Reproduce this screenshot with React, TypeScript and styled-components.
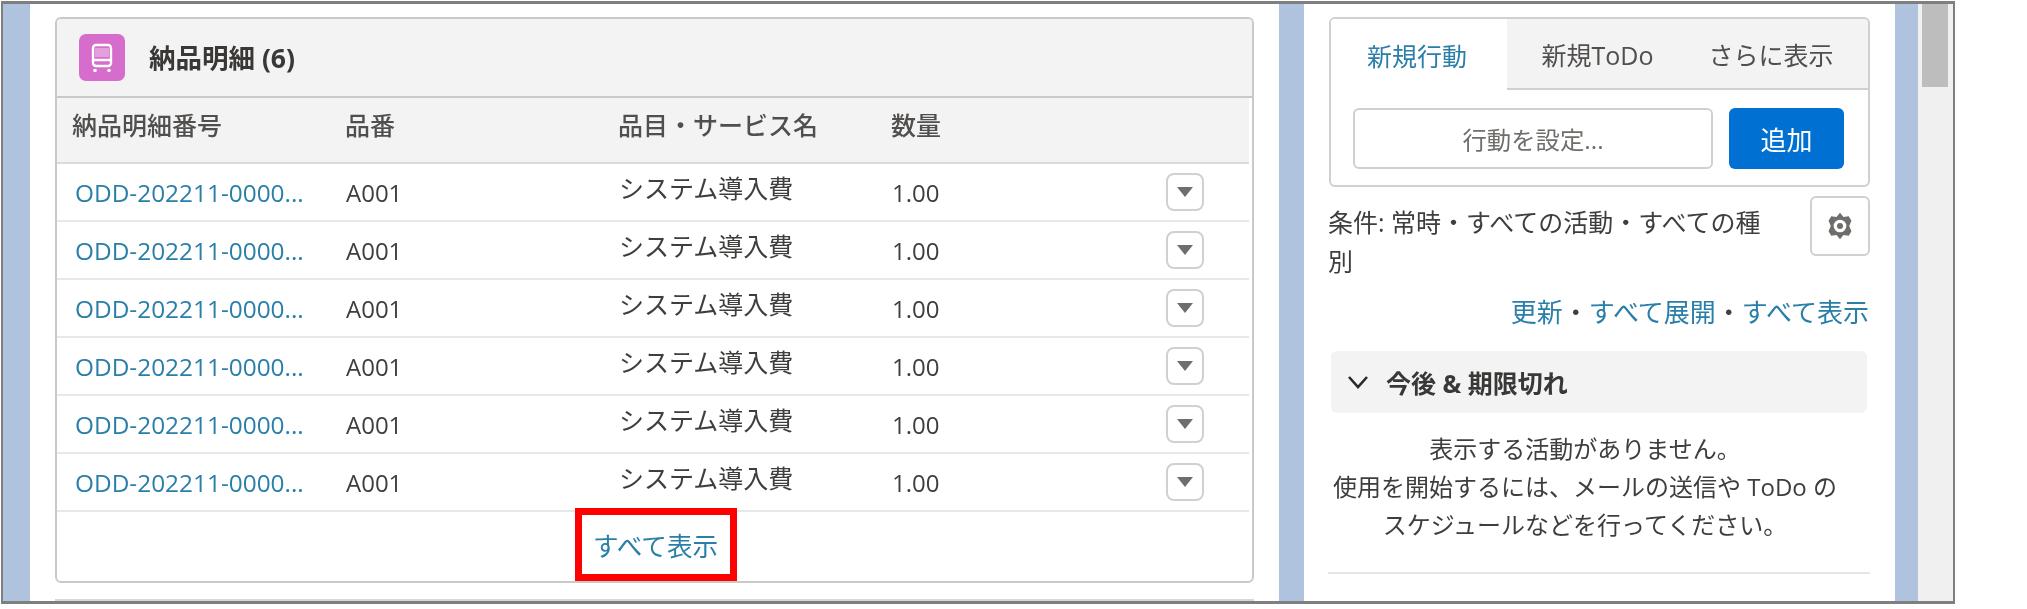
import React from 'react';
import styled, { createGlobalStyle } from 'styled-components';

const rows = [1, 2, 3, 4, 5, 6];

const App = () => {
  return (
    <>
      <GlobalStyle />
      <Frame>
        <Gutter $width={27} />

        {/* Left column: delivery lines */}
        <MainPanel>
          <Card>
            <CardHeader>
              <CardIcon>
                <svg width="46" height="47" viewBox="0 0 46 47">
                  <rect x="14" y="11" width="18" height="21" rx="3" fill="none" stroke="#fff" strokeWidth="2.4" />
                  <rect x="16" y="14" width="14" height="9" fill="#fff" opacity="0.35" />
                  <path d="M14 26h18" stroke="#fff" strokeWidth="2.4" />
                  <circle cx="16" cy="36.5" r="1.8" fill="#fff" />
                  <circle cx="30" cy="36.5" r="1.8" fill="#fff" />
                </svg>
              </CardIcon>
              <CardTitle>納品明細 (6)</CardTitle>
            </CardHeader>
            <TableArea>
              <ColumnHead>
                <HeadCell>納品明細番号</HeadCell>
                <HeadCell>品番</HeadCell>
                <HeadCell>品目・サービス名</HeadCell>
                <HeadCell>数量</HeadCell>
              </ColumnHead>
              {rows.map((n) => (
                <Row key={n}>
                  <LinkCell>ODD-202211-0000...</LinkCell>
                  <Cell>A001</Cell>
                  <NameCell>システム導入費</NameCell>
                  <Cell>1.00</Cell>
                  <MenuButton>
                    <svg width="16" height="10" viewBox="0 0 16 10">
                      <path d="M0 0h16L8 10z" fill="#706e6b" />
                    </svg>
                  </MenuButton>
                </Row>
              ))}
            </TableArea>
            <CardFooter>
              <ViewAll>すべて表示</ViewAll>
            </CardFooter>
          </Card>
          <NextCard />
        </MainPanel>

        <Gutter $width={25} />

        {/* Right column: activity */}
        <SidePanel>
          <TabCard>
            <Tabs>
              <Tab $active>新規行動</Tab>
              <Tab>新規ToDo</Tab>
              <Tab>さらに表示</Tab>
            </Tabs>
            <Composer>
              <ActionInput>行動を設定...</ActionInput>
              <AddButton>追加</AddButton>
            </Composer>
          </TabCard>

          <FilterRow>
            <FilterText>条件: 常時・すべての活動・すべての種別</FilterText>
            <GearButton>
              <svg width="30" height="30" viewBox="0 0 26 26">
                <path
                  fillRule="evenodd"
                  d="M13 1.5l3 3.6 4.6-.6 2.3 4-1.900 4.500 1.900 4.500-2.300 4-4.600-.6-3 3.600-3-3.600-4.600.6-2.300-4L5 13 3.100 8.500l2.300-4 4.600.6zM13 7.500a5.500 5.500 0 1 0 0 11 5.500 5.500 0 0 0 0-11z"
                  fill="#706e6b"
                />
                <circle cx="13" cy="13" r="2.600" fill="#706e6b" />
              </svg>
            </GearButton>
          </FilterRow>

          <ActionLinks>
            <a>更新</a>
            <Dot>・</Dot>
            <a>すべて展開</a>
            <Dot>・</Dot>
            <a>すべて表示</a>
          </ActionLinks>

          <SectionBar>
            <svg width="22" height="14" viewBox="0 0 22 14">
              <path d="M2 2l9 10 9-10" fill="none" stroke="#2b2826" strokeWidth="2.600" />
            </svg>
            <SectionTitle>今後 &amp; 期限切れ</SectionTitle>
          </SectionBar>

          <EmptyText>
            表示する活動がありません。
            <br />
            使用を開始するには、メールの送信や ToDo の
            <br />
            スケジュールなどを行ってください。
          </EmptyText>
          <Divider />
        </SidePanel>

        <Gutter $width={23} />

        <ScrollTrack>
          <ScrollThumb />
        </ScrollTrack>
      </Frame>
    </>
  );
};

export default App;

/* Styled Components */
const GlobalStyle = createGlobalStyle`
  html, body {
    margin: 0;
    padding: 0;
    background: #fff;
  }
  body {
    font-family: 'Open Sans', 'Noto Sans CJK JP', sans-serif;
    color: #3e3e3c;
  }
`;

/* the reference is an upscaled capture, so everything is a little soft */
const Frame = styled.div`
  box-sizing: border-box;
  display: flex;
  width: 1954px;
  height: 603px;
  margin: 1px 0 0 1px;
  border: 3px solid #7f7f7f;
  border-left-width: 2px;
  border-right-width: 2px;
  overflow: hidden;
  background: #fff;
  filter: blur(0.45px);
`;

const Gutter = styled.div<{ $width: number }>`
  flex: 0 0 ${(p) => p.$width}px;
  background: #afc3de;
`;

const MainPanel = styled.div`
  box-sizing: border-box;
  flex: 0 0 1249px;
  padding: 13px 25px 0;
  background: #fff;
`;

const Card = styled.div`
  box-sizing: border-box;
  height: 566px;
  border: 2px solid #c9c9c9;
  border-radius: 6px;
  overflow: hidden;
  background: #fff;
`;

const NextCard = styled.div`
  height: 20px;
  margin-top: 16px;
  border-top: 2px solid #d8d8d8;
`;

const CardHeader = styled.div`
  box-sizing: border-box;
  display: flex;
  align-items: center;
  gap: 24px;
  height: 79px;
  padding-left: 22px;
  background: #f3f3f3;
  border-bottom: 2px solid #c9c9c9;
`;

const CardIcon = styled.div`
  width: 46px;
  height: 47px;
  border-radius: 7px;
  background: #d66ccb;
`;

const CardTitle = styled.div`
  margin-top: -2px;
  font-size: 26.5px;
  font-weight: 700;
  color: #3a3836;
`;

const TableArea = styled.div`
  width: 1192px;
`;

const ColumnHead = styled.div`
  box-sizing: border-box;
  display: grid;
  grid-template-columns: repeat(4, 273px);
  align-items: center;
  height: 66px;
  padding: 0 0 12px 15px;
  background: #f3f3f3;
  border-bottom: 2px solid #dddbda;
`;

const HeadCell = styled.div`
  font-size: 25px;
  font-weight: 500;
  color: #514f4d;
`;

const Row = styled.div`
  box-sizing: border-box;
  display: grid;
  grid-template-columns: 273px 273px 273px 273px 1fr;
  align-items: center;
  height: 58px;
  padding-left: 18px;
  border-bottom: 2px solid #e8e8e8;
`;

const Cell = styled.div`
  font-size: 24px;
  color: #3e3e3c;
  margin-left: -2px;
`;

const LinkCell = styled(Cell)`
  margin-left: 0;
  font-size: 24.4px;
  color: #2a7fa8;
`;

const NameCell = styled(Cell)`
  margin-top: -10px;
  font-size: 25px;
`;

const MenuButton = styled.div`
  box-sizing: border-box;
  display: flex;
  align-items: center;
  justify-content: center;
  width: 38px;
  height: 38px;
  margin-left: -1px;
  border: 2px solid #d0d0d0;
  border-radius: 8px;
  background: #fff;
`;

const CardFooter = styled.div`
  display: flex;
  justify-content: center;
  align-items: flex-start;
  height: 70px;
`;

/* the red box is an annotation laid over the card footer */
const ViewAll = styled.div`
  box-sizing: border-box;
  display: flex;
  align-items: center;
  justify-content: center;
  width: 162px;
  height: 73px;
  margin: -4px 0 0 2px;
  border: 7px solid #f00;
  font-size: 25.6px;
  color: #2a7fa8;
`;

const SidePanel = styled.div`
  box-sizing: border-box;
  flex: 0 0 590px;
  padding: 13px 25px 0 24px;
  background: #fff;
`;

const TabCard = styled.div`
  box-sizing: border-box;
  width: 541px;
  height: 170px;
  margin-left: 1px;
  border: 2px solid #d0d0d0;
  border-radius: 6px;
  overflow: hidden;
`;

const Tabs = styled.div`
  display: grid;
  grid-template-columns: 176px 1fr 178px;
  height: 71px;
`;

const Tab = styled.div<{ $active?: boolean }>`
  box-sizing: border-box;
  display: flex;
  align-items: center;
  justify-content: center;
  padding-right: ${(p) => (p.$active ? '4px' : '2px')};
  font-size: 25px;
  color: ${(p) => (p.$active ? '#2a7fa8' : '#514f4d')};
  background: ${(p) => (p.$active ? '#fff' : '#f3f3f3')};
  border-bottom: ${(p) => (p.$active ? 'none' : '2px solid #d0d0d0')};

  &:last-child {
    padding-right: 16px;
  }
`;

const Composer = styled.div`
  display: flex;
  gap: 16px;
  padding: 18px 22px 0;
`;

const ActionInput = styled.div`
  box-sizing: border-box;
  display: flex;
  align-items: center;
  justify-content: center;
  width: 360px;
  height: 61px;
  border: 2px solid #d0d0d0;
  border-radius: 6px;
  font-size: 24.4px;
  color: #706e6b;
`;

const AddButton = styled.div`
  display: flex;
  align-items: center;
  justify-content: center;
  width: 115px;
  height: 61px;
  border-radius: 6px;
  background: #0070d2;
  font-size: 26px;
  color: #fff;
`;

const FilterRow = styled.div`
  display: flex;
  justify-content: space-between;
  width: 542px;
  margin-top: 9px;
`;

const FilterText = styled.div`
  width: 445px;
  margin-top: 7px;
  font-size: 25px;
  line-height: 39px;
  color: #3e3e3c;
`;

const GearButton = styled.div`
  box-sizing: border-box;
  display: flex;
  align-items: center;
  justify-content: center;
  width: 60px;
  height: 60px;
  border: 2px solid #d0d0d0;
  border-radius: 6px;
`;

const ActionLinks = styled.div`
  display: flex;
  justify-content: flex-end;
  width: 541px;
  margin-top: 11px;
  font-size: 26px;
  color: #2a7fa8;
`;

const Dot = styled.span`
  color: #3e3e3c;
`;

const SectionBar = styled.div`
  display: flex;
  align-items: center;
  gap: 17px;
  width: 536px;
  height: 62px;
  margin: 21px 0 0 3px;
  padding-left: 16px;
  box-sizing: border-box;
  border-radius: 6px;
  background: #f3f3f3;
`;

const SectionTitle = styled.div`
  font-size: 25px;
  font-weight: 700;
  color: #3a3836;
`;

const EmptyText = styled.div`
  width: 514px;
  margin-top: 17px;
  font-size: 24px;
  line-height: 38px;
  text-align: center;
  color: #3e3e3c;
`;

const Divider = styled.div`
  width: 542px;
  height: 2px;
  margin-top: 28px;
  background: #e5e5e5;
`;

const ScrollTrack = styled.div`
  flex: 1;
  padding: 0 5px 0 4px;
  background: #f0f0f0;
`;

const ScrollThumb = styled.div`
  height: 83px;
  background: #bdbdbd;
`;
